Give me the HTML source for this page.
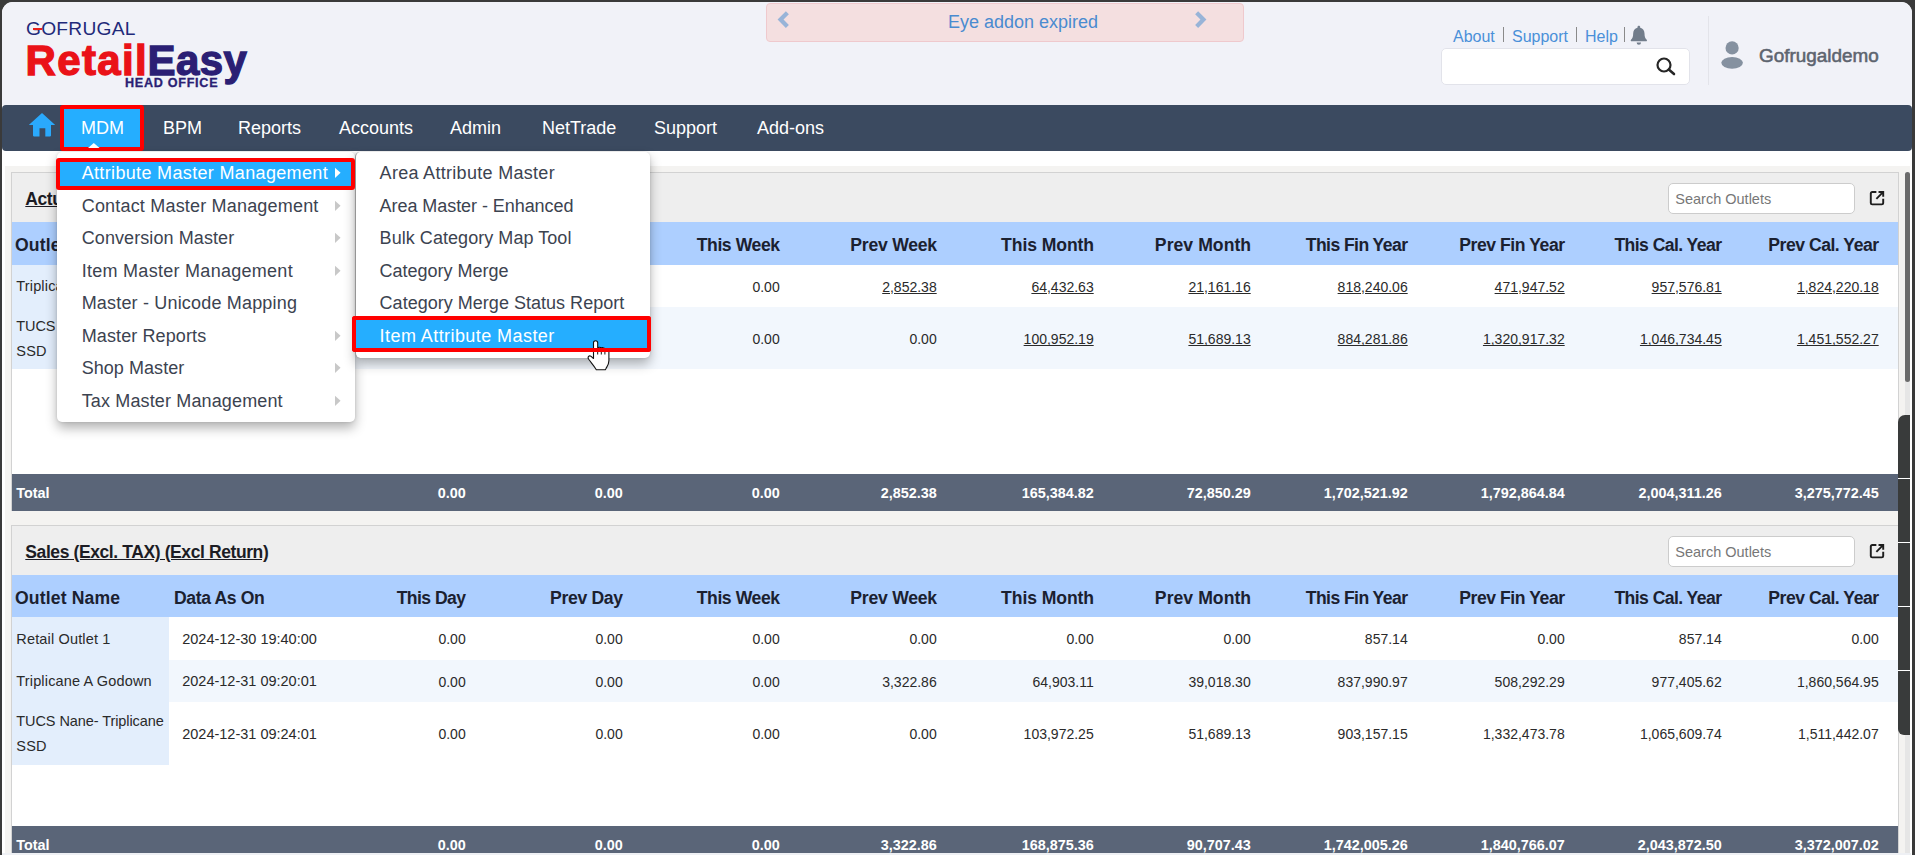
<!DOCTYPE html>
<html lang="en">
<head>
<meta charset="utf-8">
<title>RetailEasy Head Office</title>
<style>
*{box-sizing:border-box;margin:0;padding:0}
html,body{width:1915px;height:855px;overflow:hidden;background:#3a3a3a;font-family:"Liberation Sans","DejaVu Sans",sans-serif;color:#222}
#win{position:absolute;left:2px;top:2px;width:1910px;height:853px;background:#fff;border-radius:11px 11px 0 0;overflow:hidden}
#hdr{position:absolute;left:0;top:0;width:1910px;height:103px;background:#f1f2f8}
/* logo */
#logo{position:absolute;left:0;top:0;width:260px;height:103px}
/* banner */
#banner{position:absolute;left:764.3px;top:.8px;width:477.5px;height:38.8px;background:#f4dfe0;border:1px solid #efc9cd;border-radius:4px}
#banner .t{position:absolute;left:0;right:0;top:7.8px;text-align:center;font-size:18px;color:#4a8bd0;padding-left:36px}
.toplinks{position:absolute;top:26px;font-size:16px;color:#4a90d9;white-space:nowrap}
.vsep{position:absolute;top:25px;width:1px;height:15px;background:#8a8a8a}
#sbox{position:absolute;left:1439.3px;top:46px;width:248.8px;height:36.6px;background:#fff;border:1px solid #e2e3ea;border-radius:5px}
#hsep{position:absolute;left:1706px;top:14px;width:1px;height:69px;background:#e3e4ea}
#uname{position:absolute;left:1757px;top:42.5px;font-size:18.9px;font-weight:normal;-webkit-text-stroke:.55px #5d646f;color:#5d646f;white-space:nowrap}
/* nav */
#nav{position:absolute;left:0;top:103px;width:1910px;height:46px;background:#3b4a60;border-radius:4px}
.ni{position:absolute;top:0;height:46px;line-height:47px;font-size:18px;color:#fff;white-space:nowrap}
#mdm{position:absolute;left:57.5px;top:.3px;width:84.7px;height:46.2px;background:#25aeff;border:4px solid #f00;border-radius:3px}
/* content */
#cbg{position:absolute;left:3.3px;top:164px;width:1904.7px;height:700px;background:#f4f3f1}
.panel{position:absolute;border:1px solid #d2d2d2;background:#fff}
.phead{position:absolute;left:0;top:0;height:50px;background:#eeeeee}
.ptitle{position:absolute;left:13px;top:15.3px;font-size:17.5px;letter-spacing:-.4px;font-weight:bold;color:#1c1c24;text-decoration:underline;white-space:nowrap}
.sinp{position:absolute;left:1656px;top:10px;width:186.3px;height:31px;background:#fff;border:1px solid #ccc;border-radius:5px;font-size:14.5px;color:#777;line-height:31.6px;padding-left:6px}
.th{position:absolute;left:0;background:#adcfff}
.row{position:absolute;left:0;background:#fff}
.row.alt{background:#f2f7fd}
.fc{position:absolute;left:0;top:0;background:#e3eefc}
.c{position:absolute;white-space:nowrap}
.c.h{top:12.7px;font-size:17.6px;letter-spacing:-.4px;font-weight:bold;color:#1b2130}
.c.d{font-size:14.5px;color:#2a2a2a}
.c.d.r{font-size:14px}
.c.d.n{letter-spacing:.16px}
.c.m{top:50%;transform:translateY(-50%);margin-top:.5px}
.c.m.r{margin-top:1.1px}
.c.l2{line-height:25px}
.c.u{text-decoration:underline}
.c.t{top:10.7px;font-size:14.4px;font-weight:bold;color:#fff}
.pop{position:absolute;left:1856.5px;top:17.1px;width:16.2px;height:16.2px}
.tot{position:absolute;left:0;background:#5a6578}
.lg{position:absolute;white-space:nowrap;line-height:1.15}
.arr{position:absolute;left:332.9px;width:6.1px;height:11.6px;margin-top:-.7px}
/* menus */
.menu{position:absolute;background:#fff;border-radius:5px;box-shadow:0 6px 12px rgba(0,0,0,.3),0 0 3px rgba(0,0,0,.12)}
.mi{position:absolute;font-size:18px;letter-spacing:.2px;color:#3c4350;white-space:nowrap;line-height:21px}
.hl{position:absolute;background:#25aeff;border:4px solid #f00;border-radius:3px}
</style>
</head>
<body>
<div id="win">
 <div id="hdr">
  <div id="logo"></div>
  <div id="banner"><div class="t">Eye addon expired</div></div>
  <span class="toplinks" style="left:1451px">About</span><i class="vsep" style="left:1501px"></i>
  <span class="toplinks" style="left:1510px">Support</span><i class="vsep" style="left:1574px"></i>
  <span class="toplinks" style="left:1583px">Help</span><i class="vsep" style="left:1622px"></i>
  <div id="sbox"></div>
  <div id="hsep"></div>
  <div id="uname">Gofrugaldemo</div>
 </div>
 <div id="nav">
  <div id="mdm"></div>
  <span class="ni" style="left:79px">MDM</span>
  <span class="ni" style="left:161px">BPM</span>
  <span class="ni" style="left:236px">Reports</span>
  <span class="ni" style="left:337px">Accounts</span>
  <span class="ni" style="left:448px">Admin</span>
  <span class="ni" style="left:540px">NetTrade</span>
  <span class="ni" style="left:652px">Support</span>
  <span class="ni" style="left:755px">Add-ons</span>
 </div>
 <div id="cbg"></div>
 <div class="panel" style="left:9.3px;top:170.3px;width:1887.7px;height:338.7px">
<div class="phead" style="width:1885.7px"></div><div class="ptitle">Actual Sales (Incl. TAX) (Excl Return)</div>
<div class="sinp">Search Outlets</div>
<svg class="pop" viewBox="0 0 18 18"><path d="M8.2 2.2H3.6a1.6 1.6 0 0 0-1.6 1.6v10.6a1.6 1.6 0 0 0 1.6 1.6h10.6a1.6 1.6 0 0 0 1.6-1.6V9.8" fill="none" stroke="#1d1d1d" stroke-width="2.15"/><path d="M10.6 2.2h5.2v5.2M15.6 2.4L8.2 9.800" fill="none" stroke="#1d1d1d" stroke-width="2.15"/></svg>
<div class="th" style="top:48.7px;height:42.7px;width:1885.7px">
<span class="c h" style="left:2.7px;letter-spacing:0.15px">Outlet Name</span>
<span class="c h" style="left:161.7px;letter-spacing:-0.38px">Data As On</span>
<span class="c h r" style="right:1432.46px;letter-spacing:-0.56px">This Day</span>
<span class="c h r" style="right:1275.22px;letter-spacing:-0.32px">Prev Day</span>
<span class="c h r" style="right:1118.32px;letter-spacing:-0.42px">This Week</span>
<span class="c h r" style="right:961.14px;letter-spacing:-0.24px">Prev Week</span>
<span class="c h r" style="right:803.99px;letter-spacing:-0.09px">This Month</span>
<span class="c h r" style="right:646.85px;letter-spacing:0.05px">Prev Month</span>
<span class="c h r" style="right:490.47px;letter-spacing:-0.57px">This Fin Year</span>
<span class="c h r" style="right:333.34px;letter-spacing:-0.44px">Prev Fin Year</span>
<span class="c h r" style="right:176.47px;letter-spacing:-0.57px">This Cal. Year</span>
<span class="c h r" style="right:19.38px;letter-spacing:-0.48px">Prev Cal. Year</span>
</div>
<div class="row" style="top:91.4px;height:42.5px;width:1885.7px">
<div class="fc" style="height:42.5px;width:156.5px"></div>
<span class="c d m n" style="left:4px">Triplicane A Godown</span>
<span class="c d m" style="left:169.9px">2024-12-31 09:20:01</span>
<span class="c d m r" style="right:1432.3px">0.00</span>
<span class="c d m r" style="right:1275.3px">0.00</span>
<span class="c d m r" style="right:1118.3px">0.00</span>
<span class="c d m r u" style="right:961.3px">2,852.38</span>
<span class="c d m r u" style="right:804.3px">64,432.63</span>
<span class="c d m r u" style="right:647.3px">21,161.16</span>
<span class="c d m r u" style="right:490.3px">818,240.06</span>
<span class="c d m r u" style="right:333.3px">471,947.52</span>
<span class="c d m r u" style="right:176.3px">957,576.81</span>
<span class="c d m r u" style="right:19.3px">1,824,220.18</span>
</div>
<div class="row alt" style="top:133.9px;height:62.2px;width:1885.7px">
<div class="fc" style="height:62.2px;width:156.5px"></div>
<span class="c d l2" style="left:4px;top:6.4px;letter-spacing:-.08px">TUCS Nane- Triplicane</span>
<span class="c d n l2" style="left:4px;top:31.4px">SSD</span>
<span class="c d m" style="left:169.9px">2024-12-31 09:24:01</span>
<span class="c d m r" style="right:1432.3px">0.00</span>
<span class="c d m r" style="right:1275.3px">0.00</span>
<span class="c d m r" style="right:1118.3px">0.00</span>
<span class="c d m r" style="right:961.3px">0.00</span>
<span class="c d m r u" style="right:804.3px">100,952.19</span>
<span class="c d m r u" style="right:647.3px">51,689.13</span>
<span class="c d m r u" style="right:490.3px">884,281.86</span>
<span class="c d m r u" style="right:333.3px">1,320,917.32</span>
<span class="c d m r u" style="right:176.3px">1,046,734.45</span>
<span class="c d m r u" style="right:19.3px">1,451,552.27</span>
</div>
<div class="tot" style="top:300.7px;height:37px;width:1885.7px">
<span class="c t" style="left:3.9px">Total</span>
<span class="c t r" style="right:1432.3px">0.00</span>
<span class="c t r" style="right:1275.3px">0.00</span>
<span class="c t r" style="right:1118.3px">0.00</span>
<span class="c t r" style="right:961.3px">2,852.38</span>
<span class="c t r" style="right:804.3px">165,384.82</span>
<span class="c t r" style="right:647.3px">72,850.29</span>
<span class="c t r" style="right:490.3px">1,702,521.92</span>
<span class="c t r" style="right:333.3px">1,792,864.84</span>
<span class="c t r" style="right:176.3px">2,004,311.26</span>
<span class="c t r" style="right:19.3px">3,275,772.45</span>
</div></div>
<div class="panel" style="left:9.3px;top:523.3px;width:1887.7px;height:338.7px">
<div class="phead" style="width:1885.7px"></div><div class="ptitle">Sales (Excl. TAX) (Excl Return)</div>
<div class="sinp">Search Outlets</div>
<svg class="pop" viewBox="0 0 18 18"><path d="M8.2 2.2H3.6a1.6 1.6 0 0 0-1.6 1.6v10.6a1.6 1.6 0 0 0 1.6 1.6h10.6a1.6 1.6 0 0 0 1.6-1.6V9.8" fill="none" stroke="#1d1d1d" stroke-width="2.15"/><path d="M10.6 2.2h5.2v5.2M15.6 2.4L8.2 9.800" fill="none" stroke="#1d1d1d" stroke-width="2.15"/></svg>
<div class="th" style="top:48.7px;height:42px;width:1885.7px">
<span class="c h" style="left:2.7px;letter-spacing:0.15px">Outlet Name</span>
<span class="c h" style="left:161.7px;letter-spacing:-0.38px">Data As On</span>
<span class="c h r" style="right:1432.46px;letter-spacing:-0.56px">This Day</span>
<span class="c h r" style="right:1275.22px;letter-spacing:-0.32px">Prev Day</span>
<span class="c h r" style="right:1118.32px;letter-spacing:-0.42px">This Week</span>
<span class="c h r" style="right:961.14px;letter-spacing:-0.24px">Prev Week</span>
<span class="c h r" style="right:803.99px;letter-spacing:-0.09px">This Month</span>
<span class="c h r" style="right:646.85px;letter-spacing:0.05px">Prev Month</span>
<span class="c h r" style="right:490.47px;letter-spacing:-0.57px">This Fin Year</span>
<span class="c h r" style="right:333.34px;letter-spacing:-0.44px">Prev Fin Year</span>
<span class="c h r" style="right:176.47px;letter-spacing:-0.57px">This Cal. Year</span>
<span class="c h r" style="right:19.38px;letter-spacing:-0.48px">Prev Cal. Year</span>
</div>
<div class="row" style="top:90.7px;height:42.7px;width:1885.7px">
<div class="fc" style="height:42.7px;width:156.5px"></div>
<span class="c d m n" style="left:4px">Retail Outlet 1</span>
<span class="c d m" style="left:169.9px">2024-12-30 19:40:00</span>
<span class="c d m r" style="right:1432.3px">0.00</span>
<span class="c d m r" style="right:1275.3px">0.00</span>
<span class="c d m r" style="right:1118.3px">0.00</span>
<span class="c d m r" style="right:961.3px">0.00</span>
<span class="c d m r" style="right:804.3px">0.00</span>
<span class="c d m r" style="right:647.3px">0.00</span>
<span class="c d m r" style="right:490.3px">857.14</span>
<span class="c d m r" style="right:333.3px">0.00</span>
<span class="c d m r" style="right:176.3px">857.14</span>
<span class="c d m r" style="right:19.3px">0.00</span>
</div>
<div class="row alt" style="top:133.4px;height:42.2px;width:1885.7px">
<div class="fc" style="height:42.2px;width:156.5px"></div>
<span class="c d m n" style="left:4px">Triplicane A Godown</span>
<span class="c d m" style="left:169.9px">2024-12-31 09:20:01</span>
<span class="c d m r" style="right:1432.3px">0.00</span>
<span class="c d m r" style="right:1275.3px">0.00</span>
<span class="c d m r" style="right:1118.3px">0.00</span>
<span class="c d m r" style="right:961.3px">3,322.86</span>
<span class="c d m r" style="right:804.3px">64,903.11</span>
<span class="c d m r" style="right:647.3px">39,018.30</span>
<span class="c d m r" style="right:490.3px">837,990.97</span>
<span class="c d m r" style="right:333.3px">508,292.29</span>
<span class="c d m r" style="right:176.3px">977,405.62</span>
<span class="c d m r" style="right:19.3px">1,860,564.95</span>
</div>
<div class="row" style="top:175.6px;height:62.8px;width:1885.7px">
<div class="fc" style="height:62.8px;width:156.5px"></div>
<span class="c d l2" style="left:4px;top:6.7px;letter-spacing:-.08px">TUCS Nane- Triplicane</span>
<span class="c d n l2" style="left:4px;top:31.7px">SSD</span>
<span class="c d m" style="left:169.9px">2024-12-31 09:24:01</span>
<span class="c d m r" style="right:1432.3px">0.00</span>
<span class="c d m r" style="right:1275.3px">0.00</span>
<span class="c d m r" style="right:1118.3px">0.00</span>
<span class="c d m r" style="right:961.3px">0.00</span>
<span class="c d m r" style="right:804.3px">103,972.25</span>
<span class="c d m r" style="right:647.3px">51,689.13</span>
<span class="c d m r" style="right:490.3px">903,157.15</span>
<span class="c d m r" style="right:333.3px">1,332,473.78</span>
<span class="c d m r" style="right:176.3px">1,065,609.74</span>
<span class="c d m r" style="right:19.3px">1,511,442.07</span>
</div>
<div class="tot" style="top:299.7px;height:37px;width:1885.7px">
<span class="c t" style="left:3.9px">Total</span>
<span class="c t r" style="right:1432.3px">0.00</span>
<span class="c t r" style="right:1275.3px">0.00</span>
<span class="c t r" style="right:1118.3px">0.00</span>
<span class="c t r" style="right:961.3px">3,322.86</span>
<span class="c t r" style="right:804.3px">168,875.36</span>
<span class="c t r" style="right:647.3px">90,707.43</span>
<span class="c t r" style="right:490.3px">1,742,005.26</span>
<span class="c t r" style="right:333.3px">1,840,766.07</span>
<span class="c t r" style="right:176.3px">2,043,872.50</span>
<span class="c t r" style="right:19.3px">3,372,007.02</span>
</div></div>
<!-- logo -->
<div class="lg" style="left:24px;top:16.4px;font-size:19.2px;letter-spacing:.25px;color:#1f2a7a;font-weight:normal">GOFRUGAL</div>
<div style="position:absolute;left:30.8px;top:25.6px;width:9.5px;height:2.2px;background:#e8201c"></div>
<div class="lg" style="left:23.5px;top:35.3px;font-size:42px;font-weight:bold;letter-spacing:1.35px;-webkit-text-stroke:1.3px #ea1218;color:#ea1218">Retail</div>
<div class="lg" style="left:145.5px;top:35.3px;font-size:42px;font-weight:bold;letter-spacing:.4px;-webkit-text-stroke:1.3px #2b1f74;color:#2b1f74">Easy</div>
<div class="lg" style="left:123px;top:74.3px;-webkit-text-stroke:.3px #2b1f74;font-size:12.6px;font-weight:bold;letter-spacing:.72px;color:#2b1f74">HEAD OFFICE</div>
<!-- banner arrows -->
<svg style="position:absolute;left:772.6px;top:7.5px;width:16px;height:19.2px" viewBox="0 0 15 18"><path d="M10.2 1.2L13 4 8 9l5 5-2.8 2.8L2.4 9z" fill="#98b4d8"/></svg>
<svg style="position:absolute;left:1190.6px;top:7.5px;width:16px;height:19.2px" viewBox="0 0 15 18"><path d="M4.8 1.2L2 4l5 5-5 5 2.8 2.8L12.6 9z" fill="#98b4d8"/></svg>
<!-- bell -->
<svg style="position:absolute;left:1627.1px;top:22.5px;width:19.7px;height:21px" viewBox="0 0 18 20"><path d="M9 .8c.8 0 1.3.6 1.3 1.3v.5c2.600.6 4.100 2.800 4.100 5.400 0 3.300.8 4.800 2.100 6 .5.500.2 1.500-.6 1.500H2.100c-.8 0-1.100-1-.6-1.500 1.300-1.200 2.100-2.700 2.100-6 0-2.600 1.500-4.800 4.100-5.400v-.5C7.700 1.400 8.200.8 9 .8zM6.900 16.600h4.200a2.100 2.100 0 0 1-4.200 0z" fill="#727d8b"/></svg>
<!-- search icon -->
<svg style="position:absolute;left:1653px;top:55px;width:21px;height:21px" viewBox="0 0 21 21"><circle cx="9" cy="8" r="6.5" fill="none" stroke="#262626" stroke-width="2.2"/><path d="M13.8 12.600L19 17" stroke="#262626" stroke-width="2.6" stroke-linecap="round"/></svg>
<!-- user icon -->
<svg style="position:absolute;left:1717px;top:38px;width:26px;height:30px" viewBox="0 0 26 30"><circle cx="13.100" cy="7.900" r="6.600" fill="#8591a0"/><ellipse cx="13.100" cy="22.800" rx="10.800" ry="5.900" fill="#8591a0"/></svg>
<!-- home icon -->
<svg style="position:absolute;left:26px;top:110px;width:28px;height:25px" viewBox="0 0 28 25"><path d="M14 1L27.200 13H23v10.600c0 .5-.3.800-.8.800H17.300V16.200h-5.800v8.200H5.800c-.5 0-.8-.3-.8-.8V13H.8z" fill="#2aa9fc"/></svg>
<!-- mdm pointer -->
<svg style="position:absolute;left:86px;top:141px;width:12px;height:5px" viewBox="0 0 12 5"><path d="M0 5L5.800 0 11.600 5z" fill="#fff"/></svg>
<!-- scrollbar -->
<div style="position:absolute;left:1903px;top:170px;width:5px;height:700px;background:#e6e6e6"></div>
<div style="position:absolute;left:1903px;top:169.8px;width:5px;height:210px;background:#6b6b6b;border-radius:2.5px"></div>
<div style="position:absolute;left:1896.3px;top:413px;width:11.7px;height:319.5px;background:#393b3b;border-radius:7px 0 0 6px"></div>
<div style="position:absolute;left:1896.3px;top:476.4px;width:11.7px;height:1px;background:#fff;box-shadow:0 64px 0 #fff,0 128px 0 #fff,0 192px 0 #fff"></div>
<div style="position:absolute;left:1908px;top:149px;width:2px;height:710px;background:#fff"></div>
<div style="position:absolute;left:0;top:850.7px;width:1909px;height:3px;background:#eef0f4"></div>

<!-- MENUS -->
<div class="menu" style="left:54.8px;top:149.7px;width:297.8px;height:270.8px"></div>
<div class="menu" style="left:352.6px;top:149.7px;width:295.4px;height:206.3px;border-left:1px solid #959595"></div>
<div class="hl" style="left:53.6px;top:155.6px;width:299.8px;height:32.6px"></div>
<div class="hl" style="left:350.2px;top:314.2px;width:298.4px;height:36.1px"></div>
<span class="mi" style="left:79.7px;top:161.2px;color:#fff;letter-spacing:0.34px">Attribute Master Management</span>
<span class="mi" style="left:79.7px;top:193.7px;letter-spacing:0.19px">Contact Master Management</span>
<span class="mi" style="left:79.7px;top:226.2px;letter-spacing:0.09px">Conversion Master</span>
<span class="mi" style="left:79.7px;top:258.7px;letter-spacing:0.28px">Item Master Management</span>
<span class="mi" style="left:79.7px;top:291.2px;letter-spacing:0.18px">Master - Unicode Mapping</span>
<span class="mi" style="left:79.7px;top:323.7px;letter-spacing:0.11px">Master Reports</span>
<span class="mi" style="left:79.7px;top:356.2px;letter-spacing:0.05px">Shop Master</span>
<span class="mi" style="left:79.7px;top:388.7px;letter-spacing:0.14px">Tax Master Management</span>
<span class="mi" style="left:377.6px;top:161.2px;letter-spacing:0.30px">Area Attribute Master</span>
<span class="mi" style="left:377.6px;top:193.7px;letter-spacing:-0.06px">Area Master - Enhanced</span>
<span class="mi" style="left:377.6px;top:226.2px;letter-spacing:0.05px">Bulk Category Map Tool</span>
<span class="mi" style="left:377.6px;top:258.7px;letter-spacing:-0.02px">Category Merge</span>
<span class="mi" style="left:377.6px;top:291.2px;letter-spacing:0.02px">Category Merge Status Report</span>
<span class="mi" style="left:377.6px;top:323.7px;color:#fff;letter-spacing:0.43px">Item Attribute Master</span>
<svg class="arr" style="top:166px" viewBox="0 0 6 10"><path d="M0 0L5.5 5 0 10z" fill="#fff"/></svg>
<svg class="arr" style="top:198.5px" viewBox="0 0 6 10"><path d="M0 0L5.5 5 0 10z" fill="#c8c8c8"/></svg>
<svg class="arr" style="top:231px" viewBox="0 0 6 10"><path d="M0 0L5.5 5 0 10z" fill="#c8c8c8"/></svg>
<svg class="arr" style="top:263.5px" viewBox="0 0 6 10"><path d="M0 0L5.5 5 0 10z" fill="#c8c8c8"/></svg>
<svg class="arr" style="top:328.5px" viewBox="0 0 6 10"><path d="M0 0L5.5 5 0 10z" fill="#c8c8c8"/></svg>
<svg class="arr" style="top:361px" viewBox="0 0 6 10"><path d="M0 0L5.5 5 0 10z" fill="#c8c8c8"/></svg>
<svg class="arr" style="top:393.5px" viewBox="0 0 6 10"><path d="M0 0L5.5 5 0 10z" fill="#c8c8c8"/></svg>
<!-- cursor -->
<svg style="position:absolute;left:584.7px;top:337.6px;width:23px;height:31px" viewBox="-.5 -.5 23 31"><path d="M6 2.3C6 .9 7 .2 8.1 .2S10.2 .9 10.2 2.3V7.6C10.6 6.5 13.2 6.3 13.8 7.8C14.4 6.8 16.9 6.9 17.4 8.5C18.2 7.6 21.3 7.9 21.4 10.5V20C21.4 24 19.5 26 18.5 28L17.8 29.3H8.8L8 28C6.5 25.5 3.5 22 1.2 18.8C-.3 16.6 1.6 14.3 3.6 15.9L6 18Z" fill="#fff" stroke="#111" stroke-width="1.1" stroke-linejoin="round"/><path d="M10.2 8.5V14M13.8 8.8V14M17.4 9.5V14" stroke="#111" stroke-width="1" fill="none"/></svg>
<div class="hl" style="left:350.2px;top:314.2px;width:298.4px;height:36.1px;background:transparent"></div>

</div>
</body>
</html>
